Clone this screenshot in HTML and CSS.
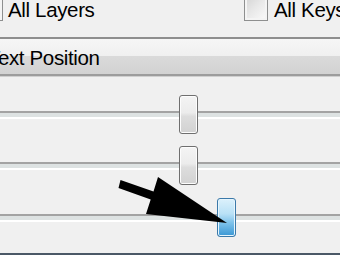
FILE: index.html
```html
<!DOCTYPE html>
<html>
<head>
<meta charset="utf-8">
<link rel="stylesheet" href="styles.css">
</head>
<body>
<div class="panel">
  <div class="toprow">
    <div class="group group-left">
      <span class="cb cb-left"></span><span class="lbl lbl-left">All Layers</span>
    </div>
    <div class="group group-right">
      <span class="cb"></span><span class="lbl lbl-right">All Keys</span>
    </div>
  </div>
  <div class="header"><span class="title">Text Position</span></div>
  <div class="sliders">
    <div class="slider"><span class="thumb" style="margin-left:179px"></span></div>
    <div class="slider"><span class="thumb" style="margin-left:179px"></span></div>
    <div class="slider"><span class="thumb thumb-active" style="margin-left:217px"></span></div>
  </div>
  <div class="footer-line"></div>
  <svg class="arrow" width="340" height="255" viewBox="0 0 340 255">
    <polygon points="120.5,180 153.5,191.5 158,177 227,223 146,214 150.7,199.5 118.5,188" fill="#000"/>
  </svg>
</div>
</body>
</html>
```
FILE: styles.css
```css
html, body {
  margin: 0;
  padding: 0;
}
body {
  width: 340px;
  height: 255px;
  overflow: hidden;
  background: #f0f0f0;
  font-family: "Liberation Sans", Arial, sans-serif;
  font-size: 20.5px;
  letter-spacing: -0.35px;
  color: #000;
}
.panel {
  position: relative;
  width: 340px;
  height: 255px;
  overflow: hidden;
}
.toprow {
  display: flex;
  height: 37px;
  white-space: nowrap;
}
.group {
  display: flex;
  align-items: flex-start;
}
.group-left {
  flex: 0 0 244px;
}
.group-right {
  flex: 0 0 auto;
}
.cb {
  display: block;
  box-sizing: border-box;
  width: 24px;
  height: 24px;
  margin-top: -3px;
  border: 1px solid #8e8f8f;
  background: linear-gradient(135deg, #d4d4d4 0%, #e8e8e8 45%, #fbfbfb 100%);
  box-shadow: inset 0 0 0 2px #f4f4f4;
  flex: 0 0 auto;
}
.cb-left {
  margin-left: -21px;
}
.lbl {
  display: block;
  line-height: 20px;
}
.lbl-left {
  margin-left: 5px;
}
.lbl-right {
  margin-left: 6px;
}
.header {
  height: 35px;
  border-top: 2px solid #8e8e8e;
  border-bottom: 2px solid #9c9c9c;
  box-shadow: 0 1px 0 #cfcfcf;
  background: linear-gradient(to bottom, #f6f6f6 0%, #f0f0f0 48%, #dadada 50%, #d2d2d2 100%);
  box-sizing: content-box;
  white-space: nowrap;
}
.title {
  display: block;
  margin-left: -12px;
  padding-top: 2px;
  line-height: 33px;
}
.sliders {
  display: flex;
  flex-direction: column;
  padding-top: 19px;
  gap: 12px;
}
.slider:last-child {
  margin-top: 1px;
}
.slider {
  display: flex;
  height: 39px;
  background: linear-gradient(to bottom,
    transparent 0, transparent 16px,
    #a3a3a3 16px, #a3a3a3 18px,
    #dde2e2 18px, #dde2e2 22px,
    #ffffff 22px, #ffffff 24px,
    transparent 24px);
}
.thumb {
  display: block;
  box-sizing: border-box;
  width: 19px;
  height: 39px;
  border: 1px solid #6f6f6f;
  border-radius: 3px;
  box-shadow: inset 0 0 0 1px #fdfdfd;
  background: linear-gradient(to bottom, #f4f4f4 0%, #ececec 45%, #dddddd 55%, #d2d2d2 100%);
}
.thumb-active {
  border-color: #3b79a9;
  box-shadow: inset 0 0 0 1px #e6f5fd;
  background: linear-gradient(to bottom, #dcf1fc 0%, #b9e1f6 40%, #7cc1ea 65%, #3a97d4 100%);
}
.footer-line {
  height: 2px;
  margin-top: 16px;
  background: #4b5866;
}
.arrow {
  position: absolute;
  left: 0;
  top: 0;
  pointer-events: none;
}
```
